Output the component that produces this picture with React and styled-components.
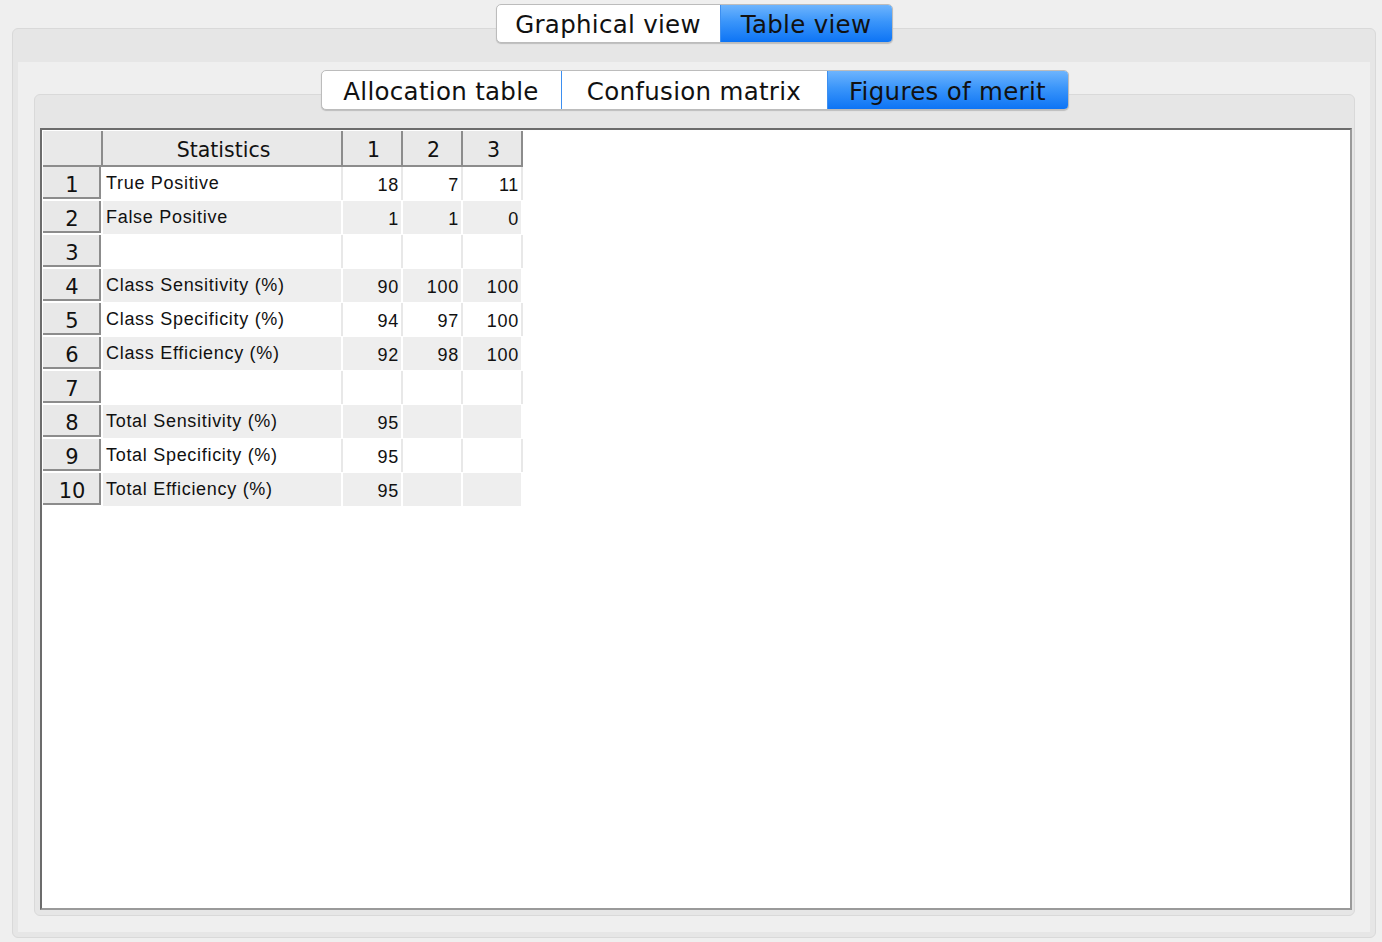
import React, { useState } from 'react'
import styled, { createGlobalStyle, css } from 'styled-components'

const GlobalStyle = createGlobalStyle`
  html, body {
    margin: 0;
    padding: 0;
    background: #efefef;
  }
  * { box-sizing: border-box; }
`

const views = [
  { label: 'Graphical view', width: 223 },
  { label: 'Table view', width: 172 },
]

const subViews = [
  { label: 'Allocation table', width: 239 },
  { label: 'Confusion matrix', width: 266 },
  { label: 'Figures of merit', width: 241 },
]

const rows = [
  ['True Positive', '18', '7', '11'],
  ['False Positive', '1', '1', '0'],
  ['', '', '', ''],
  ['Class Sensitivity (%)', '90', '100', '100'],
  ['Class Specificity (%)', '94', '97', '100'],
  ['Class Efficiency (%)', '92', '98', '100'],
  ['', '', '', ''],
  ['Total Sensitivity (%)', '95', '', ''],
  ['Total Specificity (%)', '95', '', ''],
  ['Total Efficiency (%)', '95', '', ''],
]

const Page = styled.div`
  height: 942px;
  display: flex;
  flex-direction: column;
  padding: 4px 6px 4px 12px;
  font-family: "DejaVu Sans", "Liberation Sans", sans-serif;
`

const TabBar = styled.div`
  align-self: center;
  display: flex;
  position: relative;
  z-index: 1;
  margin-bottom: ${p => p.$overlap}px;
  height: ${p => p.$height}px;
  border: 1px solid #bcbcbc;
  border-radius: 5px;
  background: #fff;
  box-shadow: 0 1px 1px rgba(0, 0, 0, 0.18);
  overflow: hidden;
`

const Tab = styled.div`
  width: ${p => p.$width}px;
  display: flex;
  align-items: center;
  justify-content: center;
  padding-top: 2px;
  font-size: ${p => p.$size}px;
  color: #111;
  letter-spacing: 0.3px;
  cursor: default;
  & + & {
    border-left: 1px solid #d4d4d4;
  }
  ${p => p.$active && css`
    background: linear-gradient(#6db4fd 0%, #3a95fa 45%, #0d74f5 100%);
    & + & { border-left-color: #3d8ff0; }
  `}
`

const OuterPanel = styled.div`
  flex: 1;
  display: flex;
  border: 1px solid #d9d9d9;
  border-radius: 6px;
  background: #e6e6e6;
  padding: 33px 5px 5px 5px;
`

const OuterContent = styled.div`
  flex: 1;
  display: flex;
  flex-direction: column;
  background: #efefef;
  padding: 8px 15px 16px 16px;
`

const InnerPanel = styled.div`
  flex: 1;
  display: flex;
  border: 1px solid #d9d9d9;
  border-radius: 6px;
  background: #e6e6e6;
  padding: 33px 2px 5px 5px;
`

const Frame = styled.div`
  flex: 1;
  background: #fff;
  border: 2px solid;
  border-color: #6c6c6c #9a9a9a #9a9a9a #6c6c6c;
  padding: 1px;
`

const Table = styled.div`
  display: flex;
  flex-direction: column;
`

const Row = styled.div`
  display: flex;
  height: ${p => p.$height}px;
`

const HeadCell = styled.div`
  width: ${p => p.$width}px;
  height: 36px;
  background: #e9e9e9;
  border-right: 2px solid #8c8c8c;
  border-bottom: 2px solid #8c8c8c;
  display: flex;
  align-items: center;
  justify-content: center;
  padding: 3px 0 0 3px;
  font-size: 20.5px;
  color: #111;
`

const RowHead = styled.div`
  width: 58px;
  height: 32px;
  margin-right: 2px;
  background: #e8e8e8;
  border-right: 2px solid #8c8c8c;
  border-bottom: 2px solid #8c8c8c;
  display: flex;
  align-items: center;
  justify-content: center;
  padding: 6px 0 0 2px;
  font-size: 21px;
  color: #111;
`

const Cell = styled.div`
  width: ${p => p.$width}px;
  height: 33px;
  background: ${p => (p.$odd ? '#eeeeee' : '#ffffff')};
  border-right: 2px solid ${p => (p.$odd ? '#ffffff' : '#e8e8e8')};
  display: flex;
  align-items: center;
  justify-content: ${p => (p.$num ? 'flex-end' : 'flex-start')};
  padding: ${p => (p.$num ? '3px 2px 0 0' : '0 0 0 3px')};
  font-family: "Liberation Sans", Arial, sans-serif;
  font-size: 18px;
  letter-spacing: 0.7px;
  color: #111;
  white-space: nowrap;
`

export default function App() {
  const [view, setView] = useState(1)
  const [subView, setSubView] = useState(2)

  return (
    <>
      <GlobalStyle />
      <Page>
        <TabBar $overlap={-15} $height={39}>
          {views.map((v, i) => (
            <Tab key={i} $width={v.width} $size={24.5} $active={i === view} onClick={() => setView(i)}>
              {v.label}
            </Tab>
          ))}
        </TabBar>
        <OuterPanel>
          <OuterContent>
            <TabBar $overlap={-16} $height={40}>
              {subViews.map((v, i) => (
                <Tab key={i} $width={v.width} $size={24.5} $active={i === subView} onClick={() => setSubView(i)}>
                  {v.label}
                </Tab>
              ))}
            </TabBar>
            <InnerPanel>
              <Frame>
                <Table>
                  <Row $height={36}>
                    <HeadCell $width={60} />
                    <HeadCell $width={240}>Statistics</HeadCell>
                    <HeadCell $width={60}>1</HeadCell>
                    <HeadCell $width={60}>2</HeadCell>
                    <HeadCell $width={60}>3</HeadCell>
                  </Row>
                  {rows.map((r, i) => (
                    <Row key={i} $height={34}>
                      <RowHead>{i + 1}</RowHead>
                      <Cell $width={240} $odd={i % 2 === 1}>{r[0]}</Cell>
                      <Cell $width={60} $odd={i % 2 === 1} $num>{r[1]}</Cell>
                      <Cell $width={60} $odd={i % 2 === 1} $num>{r[2]}</Cell>
                      <Cell $width={60} $odd={i % 2 === 1} $num>{r[3]}</Cell>
                    </Row>
                  ))}
                </Table>
              </Frame>
            </InnerPanel>
          </OuterContent>
        </OuterPanel>
      </Page>
    </>
  )
}
